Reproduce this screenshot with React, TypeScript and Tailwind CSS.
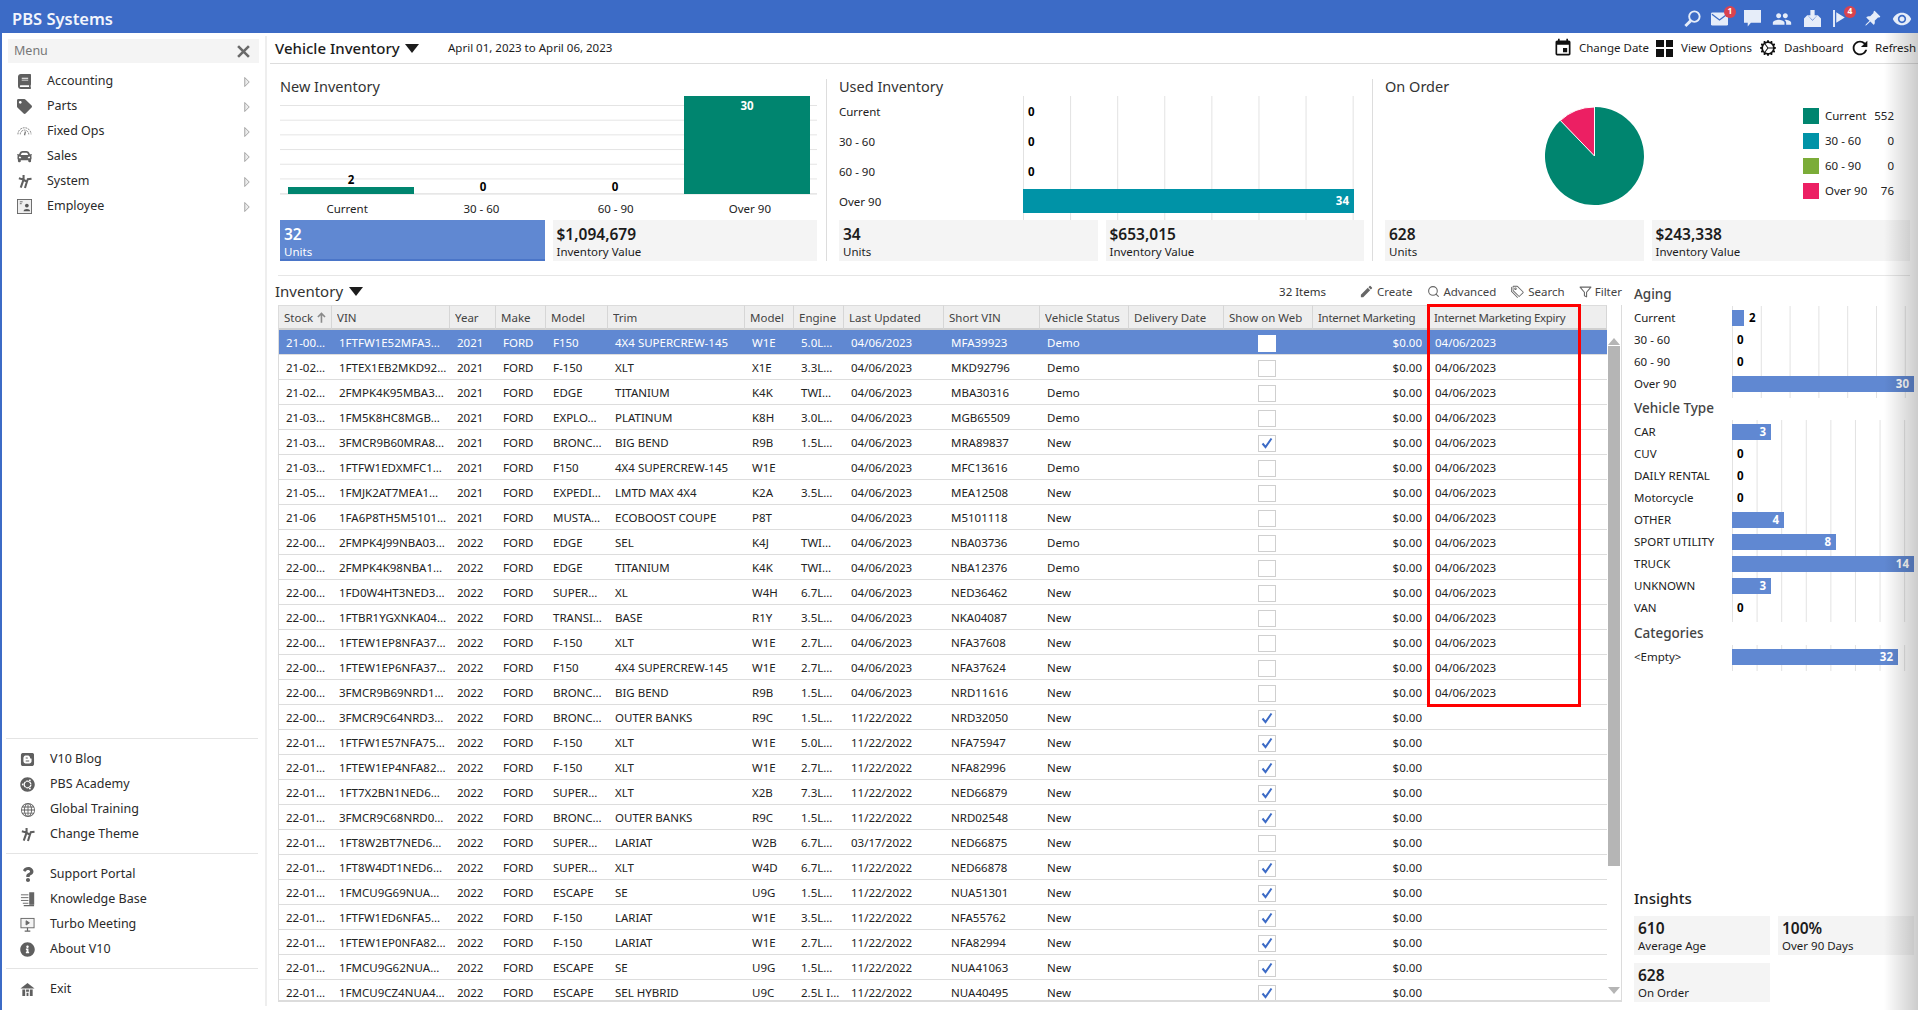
import { ReactNode } from "react";
import {
	FaBook,
	FaTag,
	FaCar,
	FaBlogger,
	FaUbuntu,
	FaQuestion,
	FaInfoCircle,
} from "react-icons/fa";
import { BsGlobe, BsPinAngleFill, BsGearWideConnected, BsTags } from "react-icons/bs";
import { MdEvent, MdRefresh, MdEdit, MdPeople, MdVisibility } from "react-icons/md";
import { FiSearch, FiFilter } from "react-icons/fi";

const BLUE = "#3c6bc6";

type Row = [string, string, string, string, string, string, string, string, string, string, string, boolean, string];

const D1 = "04/06/2023";
const D2 = "11/22/2022";

const rows: Row[] = [
	["21-00…", "1FTFW1E52MFA3…", "2021", "F150", "4X4 SUPERCREW-145", "W1E", "5.0L…", D1, "MFA39923", "Demo", "", false, D1],
	["21-02…", "1FTEX1EB2MKD92…", "2021", "F-150", "XLT", "X1E", "3.3L…", D1, "MKD92796", "Demo", "", false, D1],
	["21-02…", "2FMPK4K95MBA3…", "2021", "EDGE", "TITANIUM", "K4K", "TWI…", D1, "MBA30316", "Demo", "", false, D1],
	["21-03…", "1FM5K8HC8MGB…", "2021", "EXPLO…", "PLATINUM", "K8H", "3.0L…", D1, "MGB65509", "Demo", "", false, D1],
	["21-03…", "3FMCR9B60MRA8…", "2021", "BRONC…", "BIG BEND", "R9B", "1.5L…", D1, "MRA89837", "New", "", true, D1],
	["21-03…", "1FTFW1EDXMFC1…", "2021", "F150", "4X4 SUPERCREW-145", "W1E", "", D1, "MFC13616", "Demo", "", false, D1],
	["21-05…", "1FMJK2AT7MEA1…", "2021", "EXPEDI…", "LMTD MAX 4X4", "K2A", "3.5L…", D1, "MEA12508", "New", "", false, D1],
	["21-06", "1FA6P8TH5M5101…", "2021", "MUSTA…", "ECOBOOST COUPE", "P8T", "", D1, "M5101118", "New", "", false, D1],
	["22-00…", "2FMPK4J99NBA03…", "2022", "EDGE", "SEL", "K4J", "TWI…", D1, "NBA03736", "Demo", "", false, D1],
	["22-00…", "2FMPK4K98NBA1…", "2022", "EDGE", "TITANIUM", "K4K", "TWI…", D1, "NBA12376", "Demo", "", false, D1],
	["22-00…", "1FD0W4HT3NED3…", "2022", "SUPER…", "XL", "W4H", "6.7L…", D1, "NED36462", "New", "", false, D1],
	["22-00…", "1FTBR1YGXNKA04…", "2022", "TRANSI…", "BASE", "R1Y", "3.5L…", D1, "NKA04087", "New", "", false, D1],
	["22-00…", "1FTEW1EP8NFA37…", "2022", "F-150", "XLT", "W1E", "2.7L…", D1, "NFA37608", "New", "", false, D1],
	["22-00…", "1FTEW1EP6NFA37…", "2022", "F150", "4X4 SUPERCREW-145", "W1E", "2.7L…", D1, "NFA37624", "New", "", false, D1],
	["22-00…", "3FMCR9B69NRD1…", "2022", "BRONC…", "BIG BEND", "R9B", "1.5L…", D1, "NRD11616", "New", "", false, D1],
	["22-00…", "3FMCR9C64NRD3…", "2022", "BRONC…", "OUTER BANKS", "R9C", "1.5L…", D2, "NRD32050", "New", "", true, ""],
	["22-01…", "1FTFW1E57NFA75…", "2022", "F-150", "XLT", "W1E", "5.0L…", D2, "NFA75947", "New", "", true, ""],
	["22-01…", "1FTEW1EP4NFA82…", "2022", "F-150", "XLT", "W1E", "2.7L…", D2, "NFA82996", "New", "", true, ""],
	["22-01…", "1FT7X2BN1NED6…", "2022", "SUPER…", "XLT", "X2B", "7.3L…", D2, "NED66879", "New", "", true, ""],
	["22-01…", "3FMCR9C68NRD0…", "2022", "BRONC…", "OUTER BANKS", "R9C", "1.5L…", D2, "NRD02548", "New", "", true, ""],
	["22-01…", "1FT8W2BT7NED6…", "2022", "SUPER…", "LARIAT", "W2B", "6.7L…", "03/17/2022", "NED66875", "New", "", false, ""],
	["22-01…", "1FT8W4DT1NED6…", "2022", "SUPER…", "XLT", "W4D", "6.7L…", D2, "NED66878", "New", "", true, ""],
	["22-01…", "1FMCU9G69NUA…", "2022", "ESCAPE", "SE", "U9G", "1.5L…", D2, "NUA51301", "New", "", true, ""],
	["22-01…", "1FTFW1ED6NFA5…", "2022", "F-150", "LARIAT", "W1E", "3.5L…", D2, "NFA55762", "New", "", true, ""],
	["22-01…", "1FTEW1EP0NFA82…", "2022", "F-150", "LARIAT", "W1E", "2.7L…", D2, "NFA82994", "New", "", true, ""],
	["22-01…", "1FMCU9G62NUA…", "2022", "ESCAPE", "SE", "U9G", "1.5L…", D2, "NUA41063", "New", "", true, ""],
	["22-01…", "1FMCU9CZ4NUA4…", "2022", "ESCAPE", "SEL HYBRID", "U9C", "2.5L I…", D2, "NUA40495", "New", "", true, ""],
];

const columns: [string, number][] = [
	["Stock", 53],
	["VIN", 118],
	["Year", 46],
	["Make", 50],
	["Model", 62],
	["Trim", 137],
	["Model", 49],
	["Engine", 50],
	["Last Updated", 100],
	["Short VIN", 96],
	["Vehicle Status", 89],
	["Delivery Date", 95],
	["Show on Web", 89],
	["Internet Marketing", 116],
	["Internet Marketing Expiry", 178],
];

function SystemIcon() {
	return (
		<svg viewBox="0 0 16 16" className="w-[15px] h-[15px]" fill="none" stroke="#5f5f5f" strokeWidth="2.200">
			<path d="M7 1v5M2 4.500L7 6M7 6l3.500 2.500L8.500 15M4 14.500L7 6M10.500 8.500l1-3 4-.5" />
		</svg>
	);
}

function GaugeIcon() {
	return (
		<svg viewBox="0 0 16 16" className="w-[15px] h-[15px]" fill="none" stroke="#777">
			<path d="M1 11a7 7 0 0 1 14 0M3.500 11a4.500 4.500 0 0 1 9 0" strokeDasharray="2 1" />
			<path d="M8 12l1-4" strokeWidth="1.400" />
		</svg>
	);
}

function EmployeeIcon() {
	return (
		<svg viewBox="0 0 16 16" className="w-[15px] h-[15px]">
			<rect x="0.500" y="0.500" width="15" height="15" fill="#eee" stroke="#666" />
			<circle cx="10.500" cy="7" r="2" fill="#555" />
			<path d="M7 13c0-3 7-3 7 0z" fill="#555" />
			<path d="M3 3h3M3 5h2" stroke="#666" />
		</svg>
	);
}

function KnowledgeIcon() {
	return (
		<svg viewBox="0 0 16 16" className="w-[15px] h-[15px]" fill="none" stroke="#666">
			<path d="M1 3h8M1 6h8M1 9h8M3 12h6" />
			<path d="M10.500 1v12h4V1zM4 14.500h11" strokeWidth="1.300" fill="#666" />
		</svg>
	);
}

function MeetingIcon() {
	return (
		<svg viewBox="0 0 16 16" className="w-[15px] h-[15px]" fill="none" stroke="#666">
			<rect x="1" y="1.500" width="14" height="10" fill="#f4f4f4" />
			<path d="M6.500 4v4.500L10 6.200z" fill="#666" />
			<path d="M8 11.500v3M5 15h6" strokeWidth="1.300" />
		</svg>
	);
}

function ExitIcon() {
	return (
		<svg viewBox="0 0 16 16" className="w-[15px] h-[15px]" fill="#5f5f5f">
			<path d="M8 1L0.500 7h15z" />
			<path d="M2.500 8h3v7h-3zM6.500 8h3v2.500h-3zM10.500 8h3v7h-3zM7 11.500h2V15H7z" />
		</svg>
	);
}

function MenuChevron() {
	return (
		<svg viewBox="0 0 8 14" className="w-[6px] h-[12px]" fill="#ececec" stroke="#8a8a8a">
			<path d="M1 1l6 6-6 6z" />
		</svg>
	);
}

function Caret() {
	return (
		<svg viewBox="0 0 14 9" className="w-[14px] h-[9px]" fill="#1c1c1c">
			<path d="M0 0h14L7 9z" />
		</svg>
	);
}

function SideItem({ icon, label, chevron, wide }: { icon: ReactNode; label: string; chevron?: boolean; wide?: boolean }) {
	return (
		<div className="flex items-center h-[25px] text-[12.5px] text-[#2a2a2a]">
			<span className={wide ? "w-[15px] ml-[14px] mr-[15px] flex justify-center text-[#5f5f5f]" : "w-[15px] ml-[15px] mr-[15px] flex justify-center text-[#5f5f5f]"}>
				{icon}
			</span>
			{label}
			{chevron && (
				<span className="ml-auto mr-[15px] flex">
					<MenuChevron />
				</span>
			)}
		</div>
	);
}

function Card({ value, label, active }: { value: string; label: string; active?: boolean }) {
	return (
		<div
			className={
				active
					? "h-[41px] px-[4px] bg-[#6088d2] border-b-2 border-[#4a75c8] text-white flex flex-col"
					: "h-[41px] px-[4px] bg-[#f4f4f4] text-[#1c1c1c] flex flex-col"
			}
		>
			<span className="text-[15.5px] font-semibold leading-[19px] mt-[5px]">{value}</span>
			<span className="text-[11.5px] leading-[15px]">{label}</span>
		</div>
	);
}

type BarRow = { label: string; value: number; width: number };

function BarChart({
	data,
	color,
	rowClass,
	barClass,
	gridClass,
	labelClass,
}: {
	data: BarRow[];
	color: string;
	rowClass: string;
	barClass: string;
	gridClass: string;
	labelClass: string;
}) {
	return (
		<div className="flex text-[11.5px] text-[#222]">
			<div className={labelClass + " flex flex-col pt-px"}>
				{data.map((r) => (
					<div key={r.label} className={rowClass + " flex items-center"}>
						{r.label}
					</div>
				))}
			</div>
			<div className={gridClass + " flex-1 flex flex-col pt-px pb-[3px]"}>
				{data.map((r) => (
					<div key={r.label} className={rowClass + " flex items-center"}>
						{r.width > 30 ? (
							<div
								className={barClass + " flex items-center justify-end pr-[5px] text-white font-bold"}
								style={{ width: r.width, backgroundColor: color }}
							>
								{r.value}
							</div>
						) : r.width > 0 ? (
							<>
								<div className={barClass} style={{ width: r.width, backgroundColor: color }} />
								<span className="ml-[5px] font-bold text-black">{r.value}</span>
							</>
						) : (
							<span className="ml-[5px] font-bold text-black">{r.value}</span>
						)}
					</div>
				))}
			</div>
		</div>
	);
}

function NewInventoryChart() {
	const bars = [
		{ v: 2, h: 7 },
		{ v: 0, h: 0 },
		{ v: 0, h: 0 },
		{ v: 30, h: 98 },
	];
	return (
		<>
			<div className="h-[99px] flex items-end pl-[8px] gap-[6px] border-b border-[#eee] bg-[linear-gradient(#e4e4e4_1px,transparent_1px)] bg-size-[100%_14.7px] bg-position-[0_9px] text-[11.5px] font-bold">
				{bars.map((b, i) =>
					b.h > 50 ? (
						<div key={i} className="w-[126px] bg-[#00856f] text-white text-center pt-[1px]" style={{ height: b.h }}>
							{b.v}
						</div>
					) : (
						<div key={i} className="w-[126px] flex flex-col items-center text-black">
							<span className="leading-[15px]">{b.v}</span>
							<div className="w-full bg-[#00856f]" style={{ height: b.h }} />
						</div>
					)
				)}
			</div>
			<div className="h-[25px] pt-[5px] grid grid-cols-4 text-center text-[11.5px] text-[#222]">
				<span>Current</span>
				<span>30 - 60</span>
				<span>60 - 90</span>
				<span>Over 90</span>
			</div>
		</>
	);
}

function Pie() {
	return (
		<svg viewBox="0 0 100 100" preserveAspectRatio="none" className="w-[99px] h-[98px]">
			<path d="M50 50L50 0A50 50 0 1 1 15.500 13.800Z" fill="#00856f" />
			<path d="M50 50L15.500 13.800A50 50 0 0 1 50 0Z" fill="#ec1f63" stroke="#fff" strokeWidth="1" />
		</svg>
	);
}

function LegendRow({ color, label, value }: { color: string; label: string; value: number }) {
	return (
		<div className="flex items-center h-[16px] text-[11.5px] text-[#222]">
			<span className="w-[16px] h-[16px] mr-[6px]" style={{ backgroundColor: color }} />
			<span className="flex-1">{label}</span>
			<span>{value}</span>
		</div>
	);
}

function CheckBox({ checked, selected }: { checked: boolean; selected: boolean }) {
	return (
		<span
			className={
				selected
					? "inline-flex w-[18px] h-[17px] mr-[4px] align-middle bg-white"
					: "inline-flex w-[18px] h-[17px] mr-[4px] align-middle border border-[#cfcfcf] bg-white items-center justify-center"
			}
		>
			{checked && (
				<svg viewBox="0 0 12 12" className="w-[12px] h-[12px]" fill="none" stroke={BLUE} strokeWidth="2">
					<path d="M1.500 6.500L4.500 10 10.500 1.500" />
				</svg>
			)}
		</span>
	);
}

function TopIcon({ children, className, badge, badgeClass }: { children: ReactNode; className: string; badge?: string; badgeClass?: string }) {
	return (
		<span className={"relative w-[20px] h-[20px] flex items-center justify-center text-[#e6edf9] " + className}>
			{children}
			{badge && (
				<span className={"absolute -top-[3px] w-[12px] h-[12px] rounded-full bg-[#d9434f] text-white text-[8.500px] font-bold flex items-center justify-center " + badgeClass}>
					{badge}
				</span>
			)}
		</span>
	);
}

function ToolItem({ icon, label, className }: { icon: ReactNode; label: string; className: string }) {
	return (
		<span className={"flex items-center text-[11.5px] text-[#444] " + className}>
			{icon}
			{label}
		</span>
	);
}

const chartGridAging = "bg-[linear-gradient(90deg,#e2e2e2_1px,transparent_1px)] bg-size-[28.8px_100%]";
const chartGridType = "bg-[linear-gradient(90deg,#e2e2e2_1px,transparent_1px)] bg-size-[24.6px_100%]";

export default function App() {
	return (
		<div className="relative w-[1918px] h-[1010px] overflow-hidden bg-white flex flex-col font-['Noto_Sans','Open_Sans',sans-serif]">
			<header className="h-[33px] shrink-0 bg-[#3c6bc6] flex items-center pl-[12px] pr-[6px] pt-[4px]">
				<span className="text-[16.5px] font-semibold text-[#f2f5fc] mt-[2px]">PBS Systems</span>
				<div className="ml-auto flex items-center">
					<TopIcon className="">
						<svg viewBox="0 0 20 20" className="w-[19px] h-[19px]" fill="none" stroke="#e6edf9">
							<circle cx="12" cy="8" r="5.500" strokeWidth="2" />
							<path d="M8 12.500L2.500 18" strokeWidth="3" />
						</svg>
					</TopIcon>
					<TopIcon className="ml-[7px]" badge="1" badgeClass="left-[15px]">
						<svg viewBox="0 0 18 14" className="w-[17px] h-[14px]">
							<rect width="18" height="14" rx="1.500" fill="#e6edf9" />
							<path d="M1 2l8 6 8-6" fill="none" stroke="#3c6bc6" strokeWidth="1.400" />
						</svg>
					</TopIcon>
					<TopIcon className="ml-[13px]">
						<svg viewBox="0 0 16 16" className="w-[17px] h-[17px]" fill="#e6edf9">
							<path d="M0 0h16v12H6.500L3.500 15.500V12H0z" />
						</svg>
					</TopIcon>
					<TopIcon className="ml-[10px]">
						<MdPeople className="w-[20px] h-[20px]" />
					</TopIcon>
					<TopIcon className="ml-[10px]">
						<svg viewBox="0 0 16 16" className="w-[17px] h-[17px]" fill="#e6edf9">
							<path d="M6 0h4v5h2.500L8 9.500 3.500 5H6z" />
							<path d="M0 8l3-3h.5l4.500 5 4.500-5h.5l3 3v8H0z" />
						</svg>
					</TopIcon>
					<TopIcon className="ml-[8px]" badge="4" badgeClass="left-[14px]">
						<svg viewBox="0 0 16 16" className="w-[17px] h-[17px]" fill="#e6edf9">
							<path d="M1 0h1.800v16H1zM4 2l8 5-8 5z" />
						</svg>
					</TopIcon>
					<TopIcon className="ml-[12px]">
						<BsPinAngleFill className="w-[17px] h-[17px]" />
					</TopIcon>
					<TopIcon className="ml-[10px]">
						<MdVisibility className="w-[20px] h-[20px]" />
					</TopIcon>
				</div>
			</header>

			<div className="flex-1 min-h-0 flex items-start border-l-2 border-[#3c6bc6]">
				<aside className="w-[265px] h-[970px] mt-[3px] shrink-0 pt-[3px] pb-[4px] border-r-2 border-[#eeeeee] flex flex-col">
					<div className="mx-[6px] h-[24px] bg-[#f4f4f4] flex items-center justify-between pl-[6px] pr-[6px] text-[12.5px] text-[#777]">
						Menu
						<svg viewBox="0 0 12 12" className="w-[13px] h-[13px] mr-[3px]" fill="none" stroke="#6a6a6a" strokeWidth="2.400">
							<path d="M1 1l10 10M11 1L1 11" />
						</svg>
					</div>
					<div className="mt-[6px]">
						<SideItem icon={<FaBook className="w-[13px] h-[15px]" />} label="Accounting" chevron />
						<SideItem icon={<FaTag className="w-[15px] h-[15px]" />} label="Parts" chevron />
						<SideItem icon={<GaugeIcon />} label="Fixed Ops" chevron />
						<SideItem icon={<FaCar className="w-[15px] h-[15px]" />} label="Sales" chevron />
						<SideItem icon={<SystemIcon />} label="System" chevron />
						<SideItem icon={<EmployeeIcon />} label="Employee" chevron />
					</div>
					<div className="mt-auto ml-[4px] mr-[7px]">
						<div className="border-t border-[#e4e4e4] pt-[8px] pb-[6px]">
							<SideItem wide icon={<FaBlogger className="w-[15px] h-[15px]" />} label="V10 Blog" />
							<SideItem wide icon={<FaUbuntu className="w-[15px] h-[15px]" />} label="PBS Academy" />
							<SideItem wide icon={<BsGlobe className="w-[14px] h-[14px]" />} label="Global Training" />
							<SideItem wide icon={<SystemIcon />} label="Change Theme" />
						</div>
						<div className="border-t border-[#e4e4e4] pt-[8px] pb-[6px]">
							<SideItem wide icon={<FaQuestion className="w-[12px] h-[15px]" />} label="Support Portal" />
							<SideItem wide icon={<KnowledgeIcon />} label="Knowledge Base" />
							<SideItem wide icon={<MeetingIcon />} label="Turbo Meeting" />
							<SideItem wide icon={<FaInfoCircle className="w-[15px] h-[15px]" />} label="About V10" />
						</div>
						<div className="border-t border-[#e4e4e4] pt-[8px]">
							<SideItem wide icon={<ExitIcon />} label="Exit" />
						</div>
					</div>
				</aside>

				<main className="w-[1648px] ml-[3px] shrink-0 flex flex-col">
					<div className="h-[31px] border-b border-[#dddddd] flex items-center pl-[5px] text-[11.5px] text-[#1c1c1c]">
						<div className="w-[173px] flex items-center gap-[5px]">
							<span className="text-[15px] font-medium">Vehicle Inventory</span>
							<Caret />
						</div>
						<span>April 01, 2023 to April 06, 2023</span>
						<div className="ml-auto flex items-center">
							<span className="w-[101px] flex items-center">
								<span className="w-[24px] flex">
									<MdEvent className="w-[20px] h-[20px] -ml-[2px] text-[#111]" />
								</span>
								Change Date
							</span>
							<span className="w-[104px] flex items-center">
								<span className="w-[25px] flex">
									<span className="w-[17px] h-[17px] grid grid-cols-2 gap-[2px]">
										<i className="bg-[#111]" />
										<i className="bg-[#111]" />
										<i className="bg-[#111]" />
										<i className="bg-[#111]" />
									</span>
								</span>
								View Options
							</span>
							<span className="w-[91px] flex items-center">
								<span className="w-[24px] flex">
									<BsGearWideConnected className="w-[16px] h-[16px] text-[#111]" />
								</span>
								Dashboard
							</span>
							<span className="w-[67px] flex items-center">
								<span className="w-[24px] flex">
									<MdRefresh className="w-[22px] h-[22px] -ml-[2px] text-[#111]" />
								</span>
								Refresh
							</span>
						</div>
					</div>

					<div className="flex pl-[10px] pt-[15px]">
						<section className="w-[547px] pr-[9px] border-r border-[#dddddd]">
							<h2 className="h-[17px] leading-[14px] text-[14.5px] text-[#333]">New Inventory</h2>
							<NewInventoryChart />
							<div className="grid grid-cols-2 gap-[8px]">
								<Card active value="32" label="Units" />
								<Card value="$1,094,679" label="Inventory Value" />
							</div>
						</section>
						<section className="w-[534px] ml-[12px] pr-[8px] border-r border-[#dddddd]">
							<h2 className="h-[17px] leading-[14px] text-[14.5px] text-[#333]">Used Inventory</h2>
							<div className="h-[124px]">
								<BarChart
									color="#0093a7"
									labelClass="w-[184px]"
									rowClass="h-[30px]"
									barClass="h-[24px] -translate-y-px"
									gridClass="bg-[linear-gradient(90deg,#e2e2e2_1px,transparent_1px)] bg-size-[47.100px_100%] -mr-[10px]"
									data={[
										{ label: "Current", value: 0, width: 0 },
										{ label: "30 - 60", value: 0, width: 0 },
										{ label: "60 - 90", value: 0, width: 0 },
										{ label: "Over 90", value: 34, width: 331 },
									]}
								/>
							</div>
							<div className="grid grid-cols-2 gap-[8px]">
								<Card value="34" label="Units" />
								<Card value="$653,015" label="Inventory Value" />
							</div>
						</section>
						<section className="w-[525px] ml-[12px]">
							<h2 className="h-[17px] leading-[14px] text-[14.5px] text-[#333]">On Order</h2>
							<div className="h-[124px] flex items-start">
								<div className="ml-[160px] mt-[11px]">
									<Pie />
								</div>
								<div className="ml-[159px] mt-[12px] w-[91px] flex flex-col gap-[9px]">
									<LegendRow color="#00856f" label="Current" value={552} />
									<LegendRow color="#0093a7" label="30 - 60" value={0} />
									<LegendRow color="#7bac38" label="60 - 90" value={0} />
									<LegendRow color="#ec1f63" label="Over 90" value={76} />
								</div>
							</div>
							<div className="grid grid-cols-2 gap-[8px]">
								<Card value="628" label="Units" />
								<Card value="$243,338" label="Inventory Value" />
							</div>
						</section>
					</div>

					<div className="mt-[14px] mx-[8px] border-t border-[#e6e6e6]" />

					<div className="flex h-[726px]">
						<div className="w-[1352px] flex flex-col">
							<div className="h-[29px] flex items-center pl-[5px] pt-[2px]">
								<span className="text-[15px] text-[#333] mr-[6px]">Inventory</span>
								<Caret />
								<div className="ml-auto flex items-center">
									<span className="text-[11.5px] text-[#333]">32 Items</span>
									<ToolItem className="ml-[33px] gap-[3px]" icon={<MdEdit className="w-[15px] h-[15px] text-[#666]" />} label="Create" />
									<ToolItem className="ml-[15px] gap-[3px]" icon={<FiSearch className="w-[13px] h-[13px] text-[#666]" />} label="Advanced" />
									<ToolItem className="ml-[15px] gap-[4px]" icon={<BsTags className="w-[13px] h-[13px] text-[#666]" />} label="Search" />
									<ToolItem className="ml-[14px] gap-[3px]" icon={<FiFilter className="w-[13px] h-[14px] text-[#666]" />} label="Filter" />
								</div>
							</div>
							<div className="relative ml-[8px] w-[1344px] h-[697px] flex border-l border-r border-b-2 border-[#dcdcdc]">
								<div className="w-[1328px] h-full overflow-hidden shrink-0">
									<table className="table-fixed w-[1328px] border-separate border-spacing-0 text-[11.5px] text-[#222]">
										<colgroup>
											{columns.map(([name, w], i) => (
												<col key={name + i} style={{ width: w }} />
											))}
										</colgroup>
										<thead>
											<tr>
												{columns.map(([name], i) => (
													<th key={name + i} className={(i >= 13 ? "tracking-[-0.3px] " : "") + "h-[25px] px-[5px] pt-px font-normal text-left text-[#444] bg-[#eeeeee] border-t border-r border-b-2 border-t-[#dcdcdc] border-r-[#d6d6d6] border-b-[#d0d0d0]"}>
														<div className="overflow-hidden whitespace-nowrap flex items-center gap-[2px]">
															{name}
															{i === 0 && (
																<svg viewBox="0 0 10 12" className="w-[9px] h-[11px] ml-[2px]" fill="none" stroke="#8a8a8a" strokeWidth="1.800">
																	<path d="M5 12V2M1 5.500L5 1.500l4 4" />
																</svg>
															)}
														</div>
													</th>
												))}
											</tr>
										</thead>
										<tbody>
											{rows.map((r, i) => {
												const selected = i === 0;
												const cells = [r[0], r[1], r[2], "FORD", r[3], r[4], r[5], r[6], r[7], r[8], r[9], r[10]];
												const cls = selected
													? "h-[25px] px-[7px] pt-px whitespace-nowrap overflow-hidden bg-[#6088d2] text-white border-b border-[#dddddd]"
													: "h-[25px] px-[7px] pt-px whitespace-nowrap overflow-hidden border-b border-[#dddddd]";
												return (
													<tr key={i}>
														{cells.map((c, j) => (
															<td key={j} className={cls}>
																{c}
															</td>
														))}
														<td className={cls + " text-center"}>
															<CheckBox checked={r[11]} selected={selected} />
														</td>
														<td className={cls + " text-right"}>$0.00</td>
														<td className={cls + " !px-[6px]"}>{r[12]}</td>
													</tr>
												);
											})}
										</tbody>
									</table>
								</div>
								<div className="flex-1 flex flex-col items-center pt-[33px] pb-[6px]">
									<svg viewBox="0 0 12 7" className="w-[12px] h-[7px]" fill="#b5b5b5">
										<path d="M6 0l6 7H0z" />
									</svg>
									<div className="w-[12px] h-[520px] mt-[1px] bg-[#b5b5b5]" />
									<svg viewBox="0 0 12 7" className="w-[12px] h-[7px] mt-auto" fill="#b5b5b5">
										<path d="M6 7L0 0h12z" />
									</svg>
								</div>
								<div className="absolute -top-[1px] left-[1148px] w-[154px] h-[403px] border-[3px] border-[#ff0000] pointer-events-none" />
							</div>
						</div>

						<div className="w-[280px] ml-[12px] flex flex-col">
							<h3 className="mt-[10px] h-[16px] leading-[16px] text-[13.5px] font-medium text-[#444]">Aging</h3>
							<div className="mt-[4px]">
								<BarChart
									color="#6088d2"
									labelClass="w-[98px]"
									rowClass="h-[22px]"
									barClass="h-[16px]"
									gridClass={chartGridAging}
									data={[
										{ label: "Current", value: 2, width: 12 },
										{ label: "30 - 60", value: 0, width: 0 },
										{ label: "60 - 90", value: 0, width: 0 },
										{ label: "Over 90", value: 30, width: 182 },
									]}
								/>
							</div>
							<h3 className="mt-[2px] h-[16px] leading-[16px] text-[13.5px] font-medium text-[#444]">Vehicle Type</h3>
							<div className="mt-[4px]">
								<BarChart
									color="#6088d2"
									labelClass="w-[98px]"
									rowClass="h-[22px]"
									barClass="h-[16px]"
									gridClass={chartGridType}
									data={[
										{ label: "CAR", value: 3, width: 39 },
										{ label: "CUV", value: 0, width: 0 },
										{ label: "DAILY RENTAL", value: 0, width: 0 },
										{ label: "Motorcycle", value: 0, width: 0 },
										{ label: "OTHER", value: 4, width: 52 },
										{ label: "SPORT UTILITY", value: 8, width: 104 },
										{ label: "TRUCK", value: 14, width: 182 },
										{ label: "UNKNOWN", value: 3, width: 39 },
										{ label: "VAN", value: 0, width: 0 },
									]}
								/>
							</div>
							<h3 className="mt-[3px] h-[16px] leading-[16px] text-[13.5px] font-medium text-[#444]">Categories</h3>
							<div className="mt-[4px]">
								<BarChart
									color="#6088d2"
									labelClass="w-[98px]"
									rowClass="h-[22px]"
									barClass="h-[16px]"
									gridClass={chartGridType}
									data={[{ label: "<Empty>", value: 32, width: 166 }]}
								/>
							</div>
							<h3 className="mt-auto h-[17px] leading-[17px] text-[15px] font-medium text-[#222]">Insights</h3>
							<div className="mt-[9px] grid grid-cols-2 gap-[8px]">
								{[
									["610", "Average Age"],
									["100%", "Over 90 Days"],
									["628", "On Order"],
								].map(([v, l]) => (
									<div key={l} className="h-[39px] bg-[#f4f4f4] px-[4px] flex flex-col text-[#1c1c1c]">
										<span className="text-[15.5px] font-semibold leading-[19px] mt-[3px]">{v}</span>
										<span className="text-[11.5px] leading-[15px]">{l}</span>
									</div>
								))}
							</div>
						</div>
					</div>
				</main>
			</div>

			<div className="absolute top-[33px] right-0 bottom-0 w-[34px] bg-gradient-to-r from-transparent to-black/20 pointer-events-none" />
		</div>
	);
}
